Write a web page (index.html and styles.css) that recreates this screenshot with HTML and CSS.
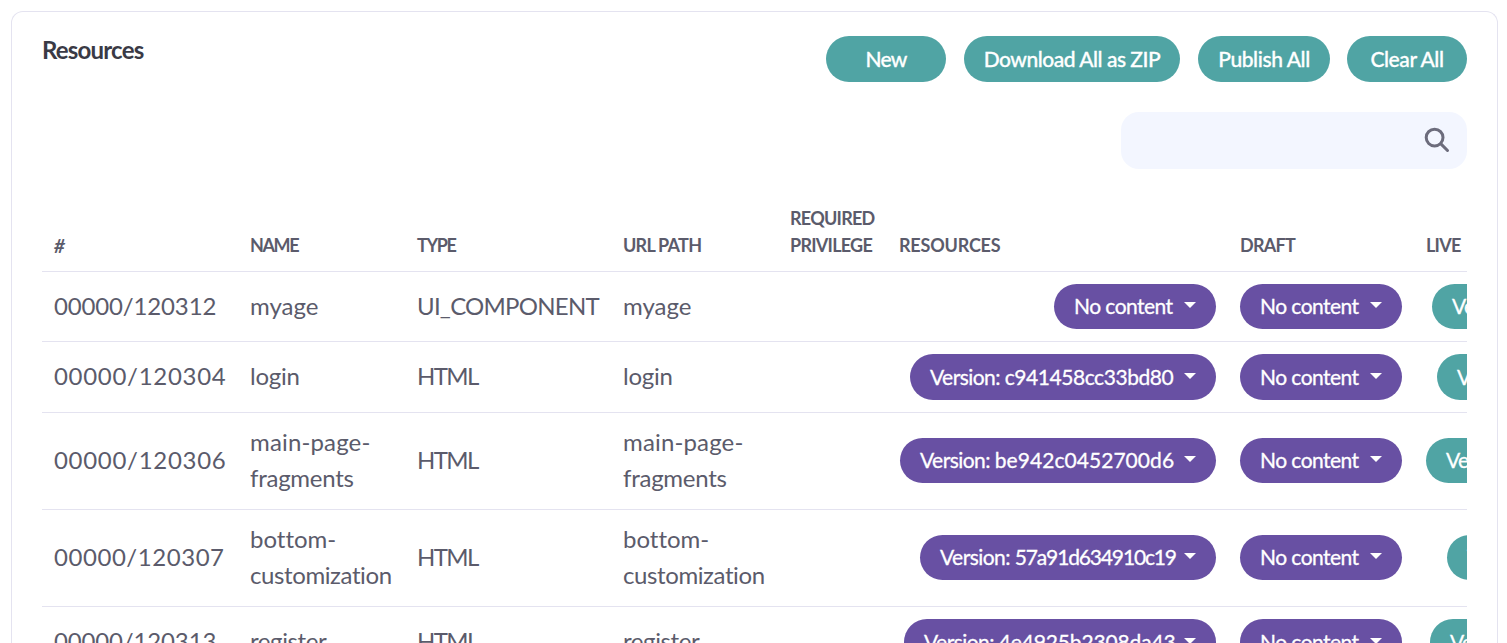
FILE: index.html
```html
<!DOCTYPE html>
<html lang="en">
<head>
<meta charset="utf-8">
<title>Resources</title>
<link rel="stylesheet" href="styles.css">
</head>
<body>
<main class="card">
  <header class="card-head">
    <h1 class="title">Resources</h1>
    <div class="actions">
      <button class="btn btn-new">New</button>
      <button class="btn btn-zip">Download All as ZIP</button>
      <button class="btn btn-publish">Publish All</button>
      <button class="btn btn-clear">Clear All</button>
    </div>
  </header>
  <div class="search">
    <svg class="search-icon" viewBox="0 0 26 26" width="26" height="26"><circle cx="10.6" cy="10.6" r="8.4"/><path d="M16.9 16.9L23.5 23.5"/></svg>
  </div>
  <div class="table">
    <div class="row head">
      <div class="hash">#</div><div class="tight">NAME</div><div class="tight">TYPE</div><div class="snug">URL PATH</div><div class="snug">REQUIRED<br>PRIVILEGE</div><div class="loose">RESOURCES</div><div class="snug">DRAFT</div><div class="snug">LIVE</div>
    </div>
    <div class="row r1">
      <div class="id-narrow">00000/120312</div><div>myage</div><div class="type-ui">UI_COMPONENT</div><div>myage</div><div></div>
      <div class="end"><span class="pill"><span>No content</span><i class="caret"></i></span></div>
      <div class="end"><span class="pill"><span>No content</span><i class="caret"></i></span></div>
      <div class="end"><span class="pill live w310"><span>Version</span></span></div>
    </div>
    <div class="row r2">
      <div class="id">00000/120304</div><div class="name-snug">login</div><div class="type">HTML</div><div class="name-snug">login</div><div></div>
      <div class="end"><span class="pill w306"><span>Version: <b class="h1">c941458cc33bd80</b></span><i class="caret"></i></span></div>
      <div class="end"><span class="pill"><span>No content</span><i class="caret"></i></span></div>
      <div class="end"><span class="pill live w305"><span>Version</span></span></div>
    </div>
    <div class="row r3">
      <div class="id">00000/120306</div><div><span class="name-wide">main-page-</span><br><span class="name-snug">fragments</span></div><div class="type">HTML</div><div><span class="name-wide">main-page-</span><br><span class="name-snug">fragments</span></div><div></div>
      <div class="end"><span class="pill w316"><span>Version: <b class="h2">be942c0452700d6</b></span><i class="caret"></i></span></div>
      <div class="end"><span class="pill"><span>No content</span><i class="caret"></i></span></div>
      <div class="end"><span class="pill live w316"><span>Version</span></span></div>
    </div>
    <div class="row r3">
      <div class="id-mid">00000/120307</div><div>bottom-<br><span class="name-tight">customization</span></div><div class="type">HTML</div><div>bottom-<br><span class="name-tight">customization</span></div><div></div>
      <div class="end"><span class="pill w296"><span>Version: <b class="h3">57a91d634910c19</b></span><i class="caret"></i></span></div>
      <div class="end"><span class="pill"><span>No content</span><i class="caret"></i></span></div>
      <div class="end"><span class="pill live w295"><span>Version</span></span></div>
    </div>
    <div class="row r2">
      <div class="id-narrow">00000/120313</div><div class="name-tight">register</div><div class="type">HTML</div><div class="name-tight">register</div><div></div>
      <div class="end"><span class="pill w312"><span>Version: <b class="h4">4e4925b2308da43</b></span><i class="caret"></i></span></div>
      <div class="end"><span class="pill"><span>No content</span><i class="caret"></i></span></div>
      <div class="end"><span class="pill live w312"><span>Version</span></span></div>
    </div>
  </div>
</main>
</body>
</html>
```
FILE: styles.css
```css
* { box-sizing: border-box; }
body {
  margin: 0;
  height: 643px;
  overflow: hidden;
  padding: 11px 9px 0 11px;
  background: #fff;
  color: #5b5b6b;
  font-family: Lato, sans-serif;
  font-variant-ligatures: none;
}
.card {
  height: 632px;
  overflow: hidden;
  padding: 24px 30px 0;
  border: 1px solid #e4e3f0;
  border-bottom: 0;
  border-radius: 12px 12px 0 0;
}
.card-head { display: flex; justify-content: space-between; height: 46px; }
.title {
  margin: 0;
  font-size: 24px;
  line-height: 27px;
  font-weight: 700;
  letter-spacing: -0.8px;
  color: #3a3a45;
}
.actions { display: flex; }
.btn {
  height: 46px;
  padding: 0 0 1px;
  border: 0;
  border-radius: 23px;
  background: #50a4a4;
  color: #fff;
  font: 500 21px/45px Lato, sans-serif;
  -webkit-text-stroke: 0.3px #fff;
  white-space: nowrap;
}
.btn-new { width: 120px; margin-right: 18px; letter-spacing: -0.8px; }
.btn-zip { width: 216px; margin-right: 18px; letter-spacing: -0.48px; }
.btn-publish { width: 132px; margin-right: 17px; letter-spacing: -0.4px; }
.btn-clear { width: 120px; letter-spacing: -0.4px; }
.search {
  display: flex;
  align-items: center;
  justify-content: flex-end;
  width: 346px;
  height: 57px;
  margin: 30px 0 0 auto;
  padding: 0 17px 2px 0;
  border-radius: 18px;
  background: #f3f6ff;
}
.search-icon { fill: none; stroke: #6c6c7c; stroke-width: 3; stroke-linecap: round; }
.table { overflow: hidden; margin-top: 23px; }
.row {
  display: grid;
  grid-template-columns: 196px 167px 206px 167px 109px 341px 186px 340px;
  align-items: center;
  width: 1712px;
  border-bottom: 1px solid #e4e3f0;
  font-size: 24px;
  line-height: 36px;
}
.row > div { padding: 0 12px 2px; white-space: nowrap; }
.row > .end { display: flex; justify-content: flex-end; padding-bottom: 0; }
.row.head {
  height: 80px;
  align-items: end;
  padding-bottom: 10px;
  font-size: 18px;
  line-height: 27px;
  font-weight: 700;
}
.hash { font-style: italic; font-size: 19px; }
.tight { letter-spacing: -1.4px; }
.snug { letter-spacing: -0.75px; }
.loose { letter-spacing: -0.2px; }
.r1 { height: 70px; }
.r2 { height: 71px; }
.r3 { height: 97px; }
.id { letter-spacing: 0.7px; }
.id-mid { letter-spacing: 0.55px; }
.id-narrow { letter-spacing: -0.15px; }
.type { letter-spacing: -1.6px; }
.type-ui { letter-spacing: -0.75px; }
.name-wide { letter-spacing: 0.15px; }
.name-snug { letter-spacing: -0.25px; }
.name-tight { letter-spacing: -0.4px; }
.pill {
  display: flex;
  align-items: center;
  justify-content: space-between;
  width: 162px;
  height: 45px;
  padding: 0 20px 1px;
  border-radius: 23px;
  background: #6850a3;
  color: #fff;
  font-size: 21px;
  letter-spacing: -0.55px;
  -webkit-text-stroke: 0.3px #fff;
}
.pill b { font-weight: 400; }
.h1 { letter-spacing: -0.45px; }
.h2 { letter-spacing: 0.05px; }
.h3 { letter-spacing: -1.15px; }
.h4 { letter-spacing: -0.15px; }
.r2 .pill { height: 46px; }
.r3 .pill { margin-bottom: 2px; }
.pill.live { background: #50a4a4; }
.pill.w295 { width: 295px; }
.pill.w296 { width: 296px; }
.pill.w305 { width: 305px; }
.pill.w306 { width: 306px; }
.pill.w310 { width: 310px; }
.pill.w312 { width: 312px; }
.pill.w316 { width: 316px; }
.caret {
  margin-bottom: 2px;
  border: 6px solid transparent;
  border-top-color: #fff;
  border-bottom: 0;
}
```
